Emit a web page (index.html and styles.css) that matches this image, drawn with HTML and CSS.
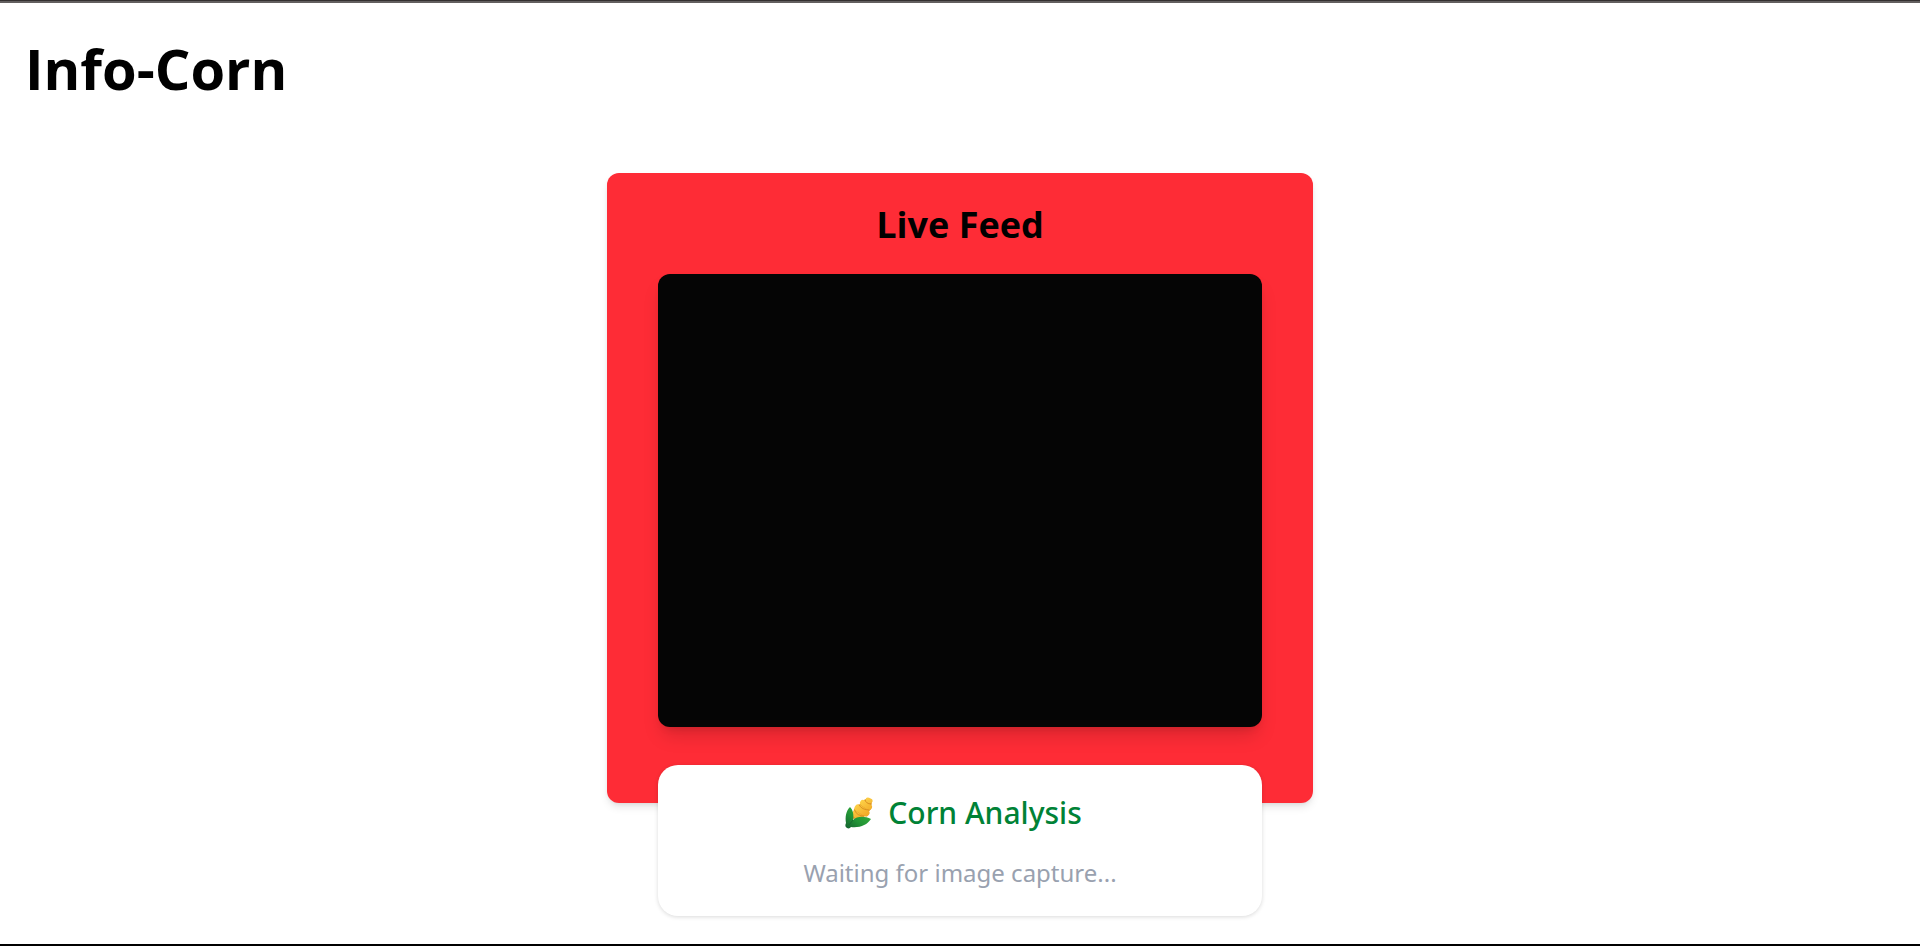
FILE: index.html
```html
<!DOCTYPE html>
<html lang="en">
<head>
  <meta charset="UTF-8">
  <meta name="viewport" content="width=device-width, initial-scale=1.0">
  <title>Info-Corn</title>
  <link rel="stylesheet" href="styles.css">
</head>
<body>
  <header class="page-header">
    <h1>Info-Corn</h1>
  </header>

  <main>
    <section class="feed-card">
      <h2>Live Feed</h2>
      <video id="liveFeed" class="feed-video" autoplay muted playsinline></video>

      <div class="analysis-card">
        <h3>
          <svg class="corn-icon" viewBox="-7 0 36 32" aria-hidden="true">
            <defs>
              <linearGradient id="cob" gradientUnits="userSpaceOnUse" x1="12" y1="4" x2="24" y2="20">
                <stop offset="0" stop-color="#ffd64c"/>
                <stop offset="1" stop-color="#efa321"/>
              </linearGradient>
              <linearGradient id="leaf" x1="1" y1="0" x2="0" y2="1">
                <stop offset="0" stop-color="#3cba3e"/>
                <stop offset="0.6" stop-color="#229436"/>
                <stop offset="1" stop-color="#14602f"/>
              </linearGradient>
            </defs>
            <path fill="#e09a25" d="M7 22L9 12L22 1L27 3L26 12L18 21Z"/>
            <g fill="none" stroke="url(#cob)" stroke-linecap="round">
              <path d="M10 17L16 21" stroke-width="6"/>
              <path d="M13 11L21 16" stroke-width="7"/>
              <path d="M18 6L24 10" stroke-width="6"/>
              <path d="M23 3L25 4" stroke-width="5"/>
            </g>
            <g fill="none" stroke="#dc9322" stroke-width="1" stroke-linecap="round">
              <path d="M20 3Q21 7 26 7"/>
              <path d="M14 8Q17 13 24 13"/>
              <path d="M10 14Q12 19 19 19"/>
            </g>
            <path fill="url(#leaf)" d="M5 10C1 14 0 20 1 26C0 28 0 30 2 31C4 32 5 31 6 30C15 31 22 28 26 22C20 19 12 19 8 23C9 18 8 13 5 10Z"/>
            <path fill="none" stroke="#176b2f" stroke-width="1" d="M8 23L4 28"/>
          </svg>
          <span>Corn Analysis</span>
        </h3>
        <p>Waiting for image capture...</p>
      </div>
    </section>
  </main>
</body>
</html>
```

FILE: styles.css
```css
* {
  box-sizing: border-box;
  margin: 0;
  padding: 0;
}

body {
  min-height: 100vh;
  border-top: 1px solid #333030;
  border-bottom: 2px solid #000;
  background-color: #fff;
  color: #000;
  font-family: 'Segoe UI', 'Noto Sans', sans-serif;
}

.page-header {
  padding: 28px 25px;
  border-top: 2px solid #625f5f;
}

h1,
h2 {
  font-family: 'Segoe UI', 'Open Sans', sans-serif;
  font-weight: 700;
}

h1 {
  font-size: 56px;
  line-height: 75px;
}

main {
  display: flex;
  justify-content: center;
  padding-top: 39px;
}

.feed-card {
  display: flex;
  flex-direction: column;
  width: 100%;
  max-width: 706px;
  padding: 27px 51px 0;
  background-color: #fe2c36;
  border-radius: 12px;
  box-shadow: 0 5px 8px -1px rgba(0, 0, 0, 0.1), 0 2px 5px -2px rgba(0, 0, 0, 0.1);
}

h2 {
  margin-bottom: 24px;
  font-size: 36px;
  line-height: 50px;
  text-align: center;
}

.feed-video {
  display: block;
  width: 100%;
  aspect-ratio: 4 / 3;
  background-color: #050505;
  border-radius: 12px;
  box-shadow: 0 12px 19px -4px rgba(0, 0, 0, 0.15), 0 5px 8px -5px rgba(0, 0, 0, 0.15);
}

/* hangs below the bottom edge of the red card */
.analysis-card {
  margin-top: 38px;
  margin-bottom: -113px;
  padding: 25px;
  background-color: #fff;
  border-radius: 20px;
  box-shadow: 0 1px 4px rgba(0, 0, 0, 0.15);
  text-align: center;
}

h3 {
  display: flex;
  justify-content: center;
  align-items: center;
  gap: 14px;
  margin-bottom: 20px;
  color: #008236;
  font-size: 30px;
  line-height: 45px;
  font-weight: 500;
}

.corn-icon {
  width: 36px;
  height: 32px;
}

.analysis-card p {
  color: #99a1af;
  font-size: 24px;
  line-height: 36px;
}

@media (max-width: 600px) {
  .page-header {
    padding: 20px 16px;
  }

  h1 {
    font-size: 38px;
    line-height: 50px;
  }

  .feed-card {
    padding: 16px 16px 0;
  }
}
```
